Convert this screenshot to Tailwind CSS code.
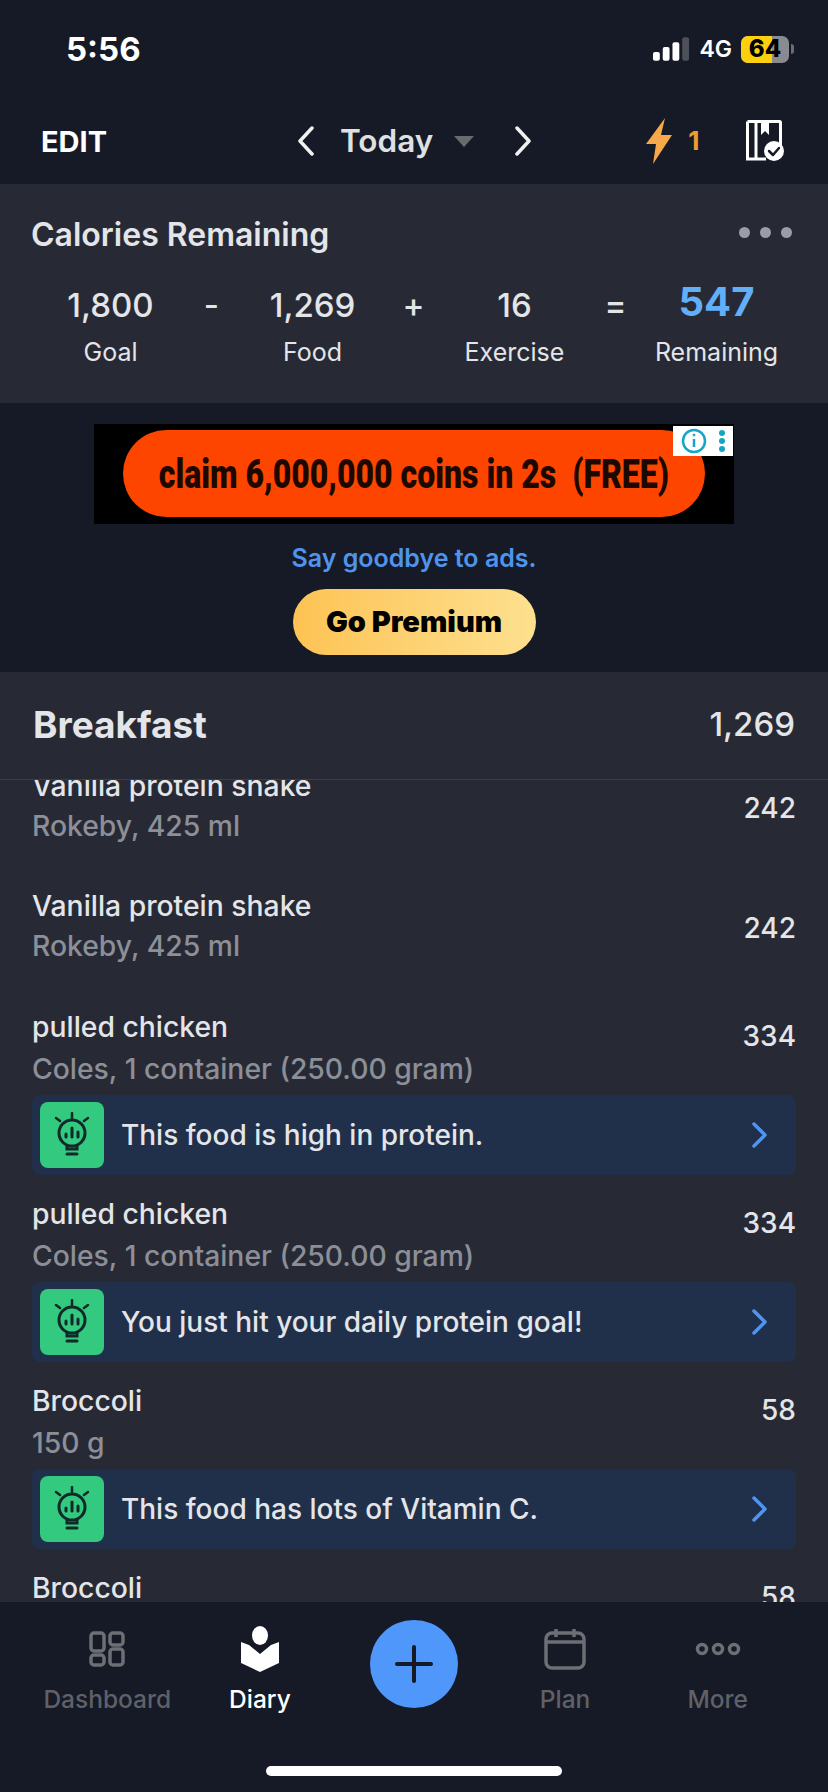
<!DOCTYPE html>
<html lang="en">
<head>
  <meta charset="UTF-8">
  <title>Diary</title>
  <script src="https://cdn.jsdelivr.net/npm/@tailwindcss/browser@4"></script>
</head>
<body class="bg-[#161926]">
  <div class="w-[828px] h-[1792px] overflow-hidden flex flex-col bg-[#161926] text-[#e4e5e8] font-[family-name:Inter,sans-serif]">

    <!-- status bar -->
    <div class="h-[98px] shrink-0 flex items-center pl-[66px] pr-[34px]">
      <span class="text-[33px] leading-none font-bold text-white">5:56</span>
      <div class="ml-auto flex items-center">
        <svg width="37" height="26" viewBox="0 0 38 26">
          <rect x="0" y="16" width="7" height="9" rx="2" fill="#fff"/>
          <rect x="10" y="11" width="7" height="14" rx="2" fill="#fff"/>
          <rect x="20" y="6" width="7" height="19" rx="2" fill="#fff"/>
          <rect x="30" y="1" width="7" height="24" rx="2" fill="#4d505a"/>
        </svg>
        <span class="ml-[9px] text-[23px] leading-none font-semibold text-white">4G</span>
        <div class="relative ml-[9px] w-[48px] h-[27px] rounded-[7px] overflow-hidden bg-[#8a8b90] flex items-center justify-center">
          <div class="absolute left-0 top-0 bottom-0 w-[31px] bg-[#fbd10f]"></div>
          <span class="relative text-[24px] leading-none font-extrabold text-black">64</span>
        </div>
        <div class="ml-[2px] w-[3px] h-[10px] rounded-r-sm bg-[#6b6d74]"></div>
      </div>
    </div>

    <!-- top bar -->
    <div class="h-[86px] shrink-0 flex items-center">
      <span class="ml-[41px] w-[64px] text-[29px] leading-none font-bold text-white">EDIT</span>
      <svg class="ml-[192px]" width="18" height="30" viewBox="0 0 18 30" fill="none" stroke="#f1f1f1" stroke-width="3.500" stroke-linecap="round" stroke-linejoin="round"><path d="M15 2 3 15l12 13"/></svg>
      <span class="ml-[25px] text-[31.500px] leading-none font-semibold text-[#dfe0e2]">Today</span>
      <div class="ml-[21px] w-0 h-0 border-x-[10px] border-x-transparent border-t-[11px] border-t-[#6a6b70]"></div>
      <svg class="ml-[40px]" width="18" height="30" viewBox="0 0 18 30" fill="none" stroke="#f1f1f1" stroke-width="3.500" stroke-linecap="round" stroke-linejoin="round"><path d="M3 2l12 13L3 28"/></svg>
      <svg class="ml-[113px]" width="28" height="46" viewBox="0 0 28 46"><path d="M20 0 1 26h10L8 46 27 17H16z" fill="#f6a84a"/></svg>
      <span class="ml-[15px] text-[26px] leading-none font-bold text-[#ef9a33]">1</span>
      <svg class="ml-[46px]" width="38" height="42" viewBox="0 0 38 42">
        <path d="M1.500 1.500h32a1 1 0 0 1 1 1V26M20 39H1.500V1.500" fill="none" stroke="#fff" stroke-width="3"/>
        <path d="M10 2v37" stroke="#fff" stroke-width="3"/>
        <path d="M15 2h8v13l-4-4-4 4z" fill="#fff"/>
        <circle cx="28" cy="31" r="10" fill="#fff"/>
        <path d="M23 31l4 4 6-7" fill="none" stroke="#161926" stroke-width="2.500" stroke-linecap="round" stroke-linejoin="round"/>
      </svg>
    </div>

    <!-- calories -->
    <section class="h-[219px] shrink-0 bg-[#272a35]">
      <div class="flex items-center justify-between pt-[33px] pl-[31px] pr-[36px]">
        <h2 class="text-[32px] leading-[36px] font-semibold text-[#e4e5e8]">Calories Remaining</h2>
        <div class="flex gap-[10px] -mt-[6px]">
          <span class="w-[11px] h-[11px] rounded-full bg-[#9a9da5]"></span>
          <span class="w-[11px] h-[11px] rounded-full bg-[#9a9da5]"></span>
          <span class="w-[11px] h-[11px] rounded-full bg-[#9a9da5]"></span>
        </div>
      </div>
      <div class="mt-[32px] ml-[60px] grid grid-cols-[repeat(7,101px)] text-center">
        <div class="h-[42px] flex items-center justify-center text-[33px] font-medium">1,800</div>
        <div class="h-[42px] flex items-center justify-center text-[33px] font-medium">-</div>
        <div class="h-[42px] flex items-center justify-center text-[33px] font-medium">1,269</div>
        <div class="h-[42px] flex items-center justify-center text-[33px] font-medium">+</div>
        <div class="h-[42px] flex items-center justify-center text-[33px] font-medium">16</div>
        <div class="h-[42px] flex items-center justify-center text-[33px] font-medium">=</div>
        <div class="h-[42px] flex items-center justify-center text-[40px] font-bold text-[#62aef7] -mt-[4px]">547</div>
        <div class="mt-[11px] h-[30px] flex items-center justify-center text-[25px]">Goal</div>
        <div></div>
        <div class="mt-[11px] h-[30px] flex items-center justify-center text-[25px]">Food</div>
        <div></div>
        <div class="mt-[11px] h-[30px] flex items-center justify-center text-[25px]">Exercise</div>
        <div></div>
        <div class="mt-[11px] h-[30px] flex items-center justify-center text-[25px]">Remaining</div>
      </div>
    </section>

    <!-- ad -->
    <section class="h-[269px] shrink-0 flex flex-col items-center pt-[21px]">
      <div class="relative w-[640px] h-[100px] bg-black flex items-center justify-center">
        <div class="w-[582px] h-[87px] -mt-[1px] rounded-full bg-[#fe4500] flex items-center justify-center">
          <span class="font-[family-name:Roboto,sans-serif] text-[40px] leading-none font-black text-[#1c0800] scale-x-[.8] whitespace-pre pt-[3px]">claim 6,000,000 coins in 2s  (FREE)</span>
        </div>
        <div class="absolute right-[1px] top-[2px] w-[60px] h-[30px] bg-white flex items-center justify-center gap-[12px]">
          <svg width="26" height="26" viewBox="0 0 26 26" fill="none" stroke="#16a5c6" stroke-width="2.500"><circle cx="13" cy="13" r="11"/><path d="M13 11v8"/><circle cx="13" cy="7" r="1" fill="#16a5c6" stroke-width="1"/></svg>
          <svg width="6" height="24" viewBox="0 0 6 24" fill="#16a5c6"><circle cx="3" cy="4" r="3"/><circle cx="3" cy="12" r="3"/><circle cx="3" cy="20" r="3"/></svg>
        </div>
      </div>
      <p class="mt-[19px] text-[25px] leading-[30px] font-semibold text-[#4f94ec]">Say goodbye to ads.</p>
      <button class="mt-[16px] w-[243px] h-[66px] rounded-full bg-gradient-to-r from-[#fdc353] to-[#fde08e] text-black text-[29px] font-black">Go Premium</button>
    </section>

    <!-- breakfast header -->
    <div class="h-[108px] shrink-0 bg-[#272a35] border-b border-[#3b3e48] flex items-center justify-between pl-[33px] pr-[33px] pb-[2px]">
      <h2 class="text-[37px] font-bold text-[#e4e5e8]">Breakfast</h2>
      <span class="text-[33px] font-medium text-[#e4e5e8]">1,269</span>
    </div>

    <!-- food list -->
    <div class="flex-1 min-h-0 overflow-hidden bg-[#272a35] px-[32px]">
      <div class="-mt-[14px]">
        <div class="h-[120px] flex justify-between">
          <div>
            <p class="text-[28.300px] leading-[40px] font-medium">Vanilla protein shake</p>
            <p class="text-[28.300px] leading-[40px] font-medium text-[#8c8f97]">Rokeby, 425 ml</p>
          </div>
          <span class="pt-[21px] text-[28px] leading-[42px] font-medium">242</span>
        </div>
        <div class="h-[120px] flex justify-between">
          <div>
            <p class="text-[28.300px] leading-[40px] font-medium">Vanilla protein shake</p>
            <p class="text-[28.300px] leading-[40px] font-medium text-[#8c8f97]">Rokeby, 425 ml</p>
          </div>
          <span class="pt-[21px] text-[28px] leading-[42px] font-medium">242</span>
        </div>

        <div class="pb-[18px]">
          <div class="flex justify-between">
            <div>
              <p class="text-[28.300px] leading-[42px] font-medium">pulled chicken</p>
              <p class="text-[28.300px] leading-[42px] font-medium text-[#8c8f97]">Coles, 1 container (250.00 gram)</p>
            </div>
            <span class="pt-[9px] text-[28px] leading-[42px] font-medium">334</span>
          </div>
          <div class="mt-[5px] h-[80px] rounded-lg bg-[#20304a] flex items-center pl-[8px] pr-[29px]">
            <div class="w-[64px] h-[66px] rounded-lg bg-[#33c97f] flex items-center justify-center">
              <svg width="40" height="46" viewBox="0 0 40 46" fill="none" stroke="#102a2a" stroke-width="2.500" stroke-linecap="round"><path d="M20 1v5M4 6l4 3M36 6l-4 3"/><circle cx="20" cy="21" r="13" stroke-width="3"/><path d="M14 25v-3M20 25v-9M26 25v-5" stroke-width="3"/><path d="M15 34v3h10v-3M15 42h10" stroke-width="3"/></svg>
            </div>
            <span class="ml-[17px] text-[28px] font-medium">This food is high in protein.</span>
            <svg class="ml-auto" width="16" height="26" viewBox="0 0 16 26" fill="none" stroke="#4f94f0" stroke-width="3.500" stroke-linecap="round" stroke-linejoin="round"><path d="M3 2l11 11L3 24"/></svg>
          </div>
        </div>

        <div class="pb-[18px]">
          <div class="flex justify-between">
            <div>
              <p class="text-[28.300px] leading-[42px] font-medium">pulled chicken</p>
              <p class="text-[28.300px] leading-[42px] font-medium text-[#8c8f97]">Coles, 1 container (250.00 gram)</p>
            </div>
            <span class="pt-[9px] text-[28px] leading-[42px] font-medium">334</span>
          </div>
          <div class="mt-[5px] h-[80px] rounded-lg bg-[#20304a] flex items-center pl-[8px] pr-[29px]">
            <div class="w-[64px] h-[66px] rounded-lg bg-[#33c97f] flex items-center justify-center">
              <svg width="40" height="46" viewBox="0 0 40 46" fill="none" stroke="#102a2a" stroke-width="2.500" stroke-linecap="round"><path d="M20 1v5M4 6l4 3M36 6l-4 3"/><circle cx="20" cy="21" r="13" stroke-width="3"/><path d="M14 25v-3M20 25v-9M26 25v-5" stroke-width="3"/><path d="M15 34v3h10v-3M15 42h10" stroke-width="3"/></svg>
            </div>
            <span class="ml-[17px] text-[28px] font-medium">You just hit your daily protein goal!</span>
            <svg class="ml-auto" width="16" height="26" viewBox="0 0 16 26" fill="none" stroke="#4f94f0" stroke-width="3.500" stroke-linecap="round" stroke-linejoin="round"><path d="M3 2l11 11L3 24"/></svg>
          </div>
        </div>

        <div class="pb-[18px]">
          <div class="flex justify-between">
            <div>
              <p class="text-[28.300px] leading-[42px] font-medium">Broccoli</p>
              <p class="text-[28.300px] leading-[42px] font-medium text-[#8c8f97]">150 g</p>
            </div>
            <span class="pt-[9px] text-[28px] leading-[42px] font-medium">58</span>
          </div>
          <div class="mt-[5px] h-[80px] rounded-lg bg-[#20304a] flex items-center pl-[8px] pr-[29px]">
            <div class="w-[64px] h-[66px] rounded-lg bg-[#33c97f] flex items-center justify-center">
              <svg width="40" height="46" viewBox="0 0 40 46" fill="none" stroke="#102a2a" stroke-width="2.500" stroke-linecap="round"><path d="M20 1v5M4 6l4 3M36 6l-4 3"/><circle cx="20" cy="21" r="13" stroke-width="3"/><path d="M14 25v-3M20 25v-9M26 25v-5" stroke-width="3"/><path d="M15 34v3h10v-3M15 42h10" stroke-width="3"/></svg>
            </div>
            <span class="ml-[17px] text-[28px] font-medium">This food has lots of Vitamin C.</span>
            <svg class="ml-auto" width="16" height="26" viewBox="0 0 16 26" fill="none" stroke="#4f94f0" stroke-width="3.500" stroke-linecap="round" stroke-linejoin="round"><path d="M3 2l11 11L3 24"/></svg>
          </div>
        </div>

        <div class="flex justify-between">
          <p class="text-[28.300px] leading-[42px] font-medium">Broccoli</p>
          <span class="pt-[9px] text-[28px] leading-[42px] font-medium">58</span>
        </div>
      </div>
    </div>

    <!-- bottom nav -->
    <nav class="relative h-[190px] shrink-0 bg-[#161926]">
      <div class="grid grid-cols-5 pl-[31px] pr-[34px] pt-[23px]">
        <div class="flex flex-col items-center text-[#5f6168]">
          <div class="h-[48px] flex items-center justify-center">
            <svg width="36" height="36" viewBox="0 0 36 36" fill="none" stroke="#6d6f75" stroke-width="3.500"><rect x="2" y="2" width="13" height="18" rx="3"/><rect x="21" y="2" width="13" height="12" rx="3"/><rect x="2" y="24" width="13" height="10" rx="3"/><rect x="21" y="18" width="13" height="16" rx="3"/></svg>
          </div>
          <span class="mt-[11px] text-[24.500px] leading-[30px] font-medium">Dashboard</span>
        </div>
        <div class="flex flex-col items-center text-white">
          <div class="h-[48px] flex items-center justify-center">
            <svg width="40" height="46" viewBox="0 0 40 46" fill="#fff"><ellipse cx="20" cy="9.500" rx="8" ry="9.500"/><path d="M1 16l8 3 11 9 11-9 8-3v21L20 46 1 37z"/></svg>
          </div>
          <span class="mt-[11px] text-[24.500px] leading-[30px] font-medium">Diary</span>
        </div>
        <div class="flex justify-center">
          <div class="-mt-[5px] ml-[3px] w-[88px] h-[88px] rounded-full bg-[#4f97fb] flex items-center justify-center">
            <svg width="38" height="38" viewBox="0 0 38 38" stroke="#161926" stroke-width="4" stroke-linecap="round"><path d="M19 2v34M2 19h34"/></svg>
          </div>
        </div>
        <div class="flex flex-col items-center text-[#5f6168]">
          <div class="h-[48px] flex items-center justify-center">
            <svg width="42" height="42" viewBox="0 0 42 42" fill="none" stroke="#6d6f75" stroke-width="3.500"><rect x="2" y="5" width="38" height="35" rx="6"/><path d="M2 14h38M12 1v8M30 1v8"/></svg>
          </div>
          <span class="mt-[11px] text-[24.500px] leading-[30px] font-medium">Plan</span>
        </div>
        <div class="flex flex-col items-center text-[#5f6168]">
          <div class="h-[48px] flex items-center justify-center">
            <svg width="46" height="14" viewBox="0 0 46 14" fill="none" stroke="#6d6f75" stroke-width="3.500"><circle cx="7" cy="7" r="4.500"/><circle cx="23" cy="7" r="4.500"/><circle cx="39" cy="7" r="4.500"/></svg>
          </div>
          <span class="mt-[11px] text-[24.500px] leading-[30px] font-medium">More</span>
        </div>
      </div>
      <div class="absolute left-[266px] bottom-[16px] w-[296px] h-[10px] rounded-full bg-white"></div>
    </nav>
  </div>
</body>
</html>
